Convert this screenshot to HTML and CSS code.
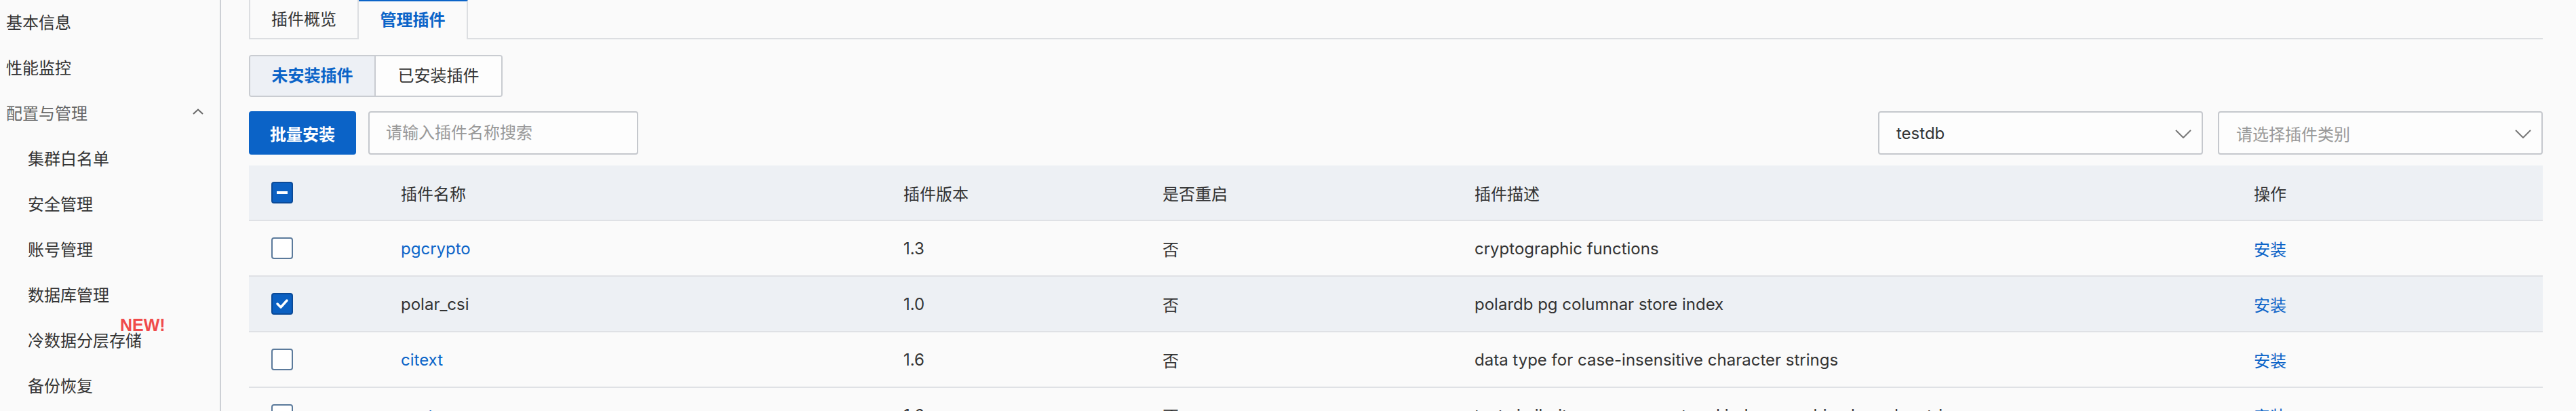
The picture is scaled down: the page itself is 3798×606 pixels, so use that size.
FILE: index.html
```html
<!DOCTYPE html>
<html lang="zh-CN">
<head>
<meta charset="utf-8">
<title>插件管理</title>
<link rel="stylesheet" href="styles.css">
</head>
<body>
<div class="app">
  <aside class="sidebar">
    <div class="nav-item">基本信息</div>
    <div class="nav-item">性能监控</div>
    <div class="nav-item nav-group">
      <span>配置与管理</span>
      <svg class="nav-chevron" width="16" height="9" viewBox="0 0 16 9"><polyline points="1,8 8,1.5 15,8" fill="none" stroke="#666" stroke-width="2"/></svg>
    </div>
    <div class="nav-item nav-sub">集群白名单</div>
    <div class="nav-item nav-sub">安全管理</div>
    <div class="nav-item nav-sub">账号管理</div>
    <div class="nav-item nav-sub">数据库管理</div>
    <div class="nav-item nav-sub nav-new">冷数据分层存储<span class="badge-new">NEW!</span></div>
    <div class="nav-item nav-sub">备份恢复</div>
  </aside>

  <main class="main">
    <div class="tabs">
      <div class="tab">插件概览</div>
      <div class="tab tab-active">管理插件</div>
      <div class="tab-fill"></div>
    </div>

    <div class="segmented">
      <div class="seg seg-active">未安装插件</div>
      <div class="seg">已安装插件</div>
    </div>

    <div class="toolbar">
      <button class="btn-primary">批量安装</button>
      <div class="search">请输入插件名称搜索</div>
      <div class="spacer"></div>
      <div class="select">
        <span class="select-value">testdb</span>
        <svg class="select-arrow" width="24" height="13" viewBox="0 0 24 13"><polyline points="1,1 12,12 23,1" fill="none" stroke="#777" stroke-width="2"/></svg>
      </div>
      <div class="select">
        <span class="select-placeholder">请选择插件类别</span>
        <svg class="select-arrow" width="24" height="13" viewBox="0 0 24 13"><polyline points="1,1 12,12 23,1" fill="none" stroke="#777" stroke-width="2"/></svg>
      </div>
    </div>

    <table class="grid">
      <colgroup>
        <col class="c-check"><col class="c-name"><col class="c-ver"><col class="c-restart"><col class="c-desc"><col class="c-op">
      </colgroup>
      <thead>
        <tr>
          <th><span class="cb cb-on"><span class="cb-dash"></span></span></th>
          <th>插件名称</th>
          <th>插件版本</th>
          <th>是否重启</th>
          <th>插件描述</th>
          <th>操作</th>
        </tr>
      </thead>
      <tbody>
        <tr>
          <td><span class="cb"></span></td>
          <td><a class="link">pgcrypto</a></td>
          <td>1.3</td>
          <td>否</td>
          <td>cryptographic functions</td>
          <td><a class="link">安装</a></td>
        </tr>
        <tr class="row-selected">
          <td><span class="cb cb-on"><svg width="20" height="16" viewBox="0 0 20 16"><polyline points="3,8 8,13 17,3" fill="none" stroke="#fff" stroke-width="3.5" stroke-linecap="round" stroke-linejoin="round"/></svg></span></td>
          <td>polar_csi</td>
          <td>1.0</td>
          <td>否</td>
          <td>polardb pg columnar store index</td>
          <td><a class="link">安装</a></td>
        </tr>
        <tr>
          <td><span class="cb"></span></td>
          <td><a class="link">citext</a></td>
          <td>1.6</td>
          <td>否</td>
          <td>data type for case-insensitive character strings</td>
          <td><a class="link">安装</a></td>
        </tr>
        <tr>
          <td><span class="cb"></span></td>
          <td><a class="link">pg_trgm</a></td>
          <td>1.6</td>
          <td>否</td>
          <td>text similarity measurement and index searching based on trigrams</td>
          <td><a class="link">安装</a></td>
        </tr>
      </tbody>
    </table>
  </main>
</div>
</body>
</html>
```

FILE: styles.css
```css
html, body {
  margin: 0;
  padding: 0;
  background: #fafafa;
}

body {
  font-family: "Inter", "Noto Sans CJK SC", sans-serif;
  font-size: 24px;
  color: #333;
  overflow: hidden;
}

.app {
  display: flex;
  height: 606px;
  overflow: hidden;
}

/* Sidebar */
.sidebar {
  width: 324px;
  flex: none;
  border-right: 2px solid #cdd0d5;
  display: flex;
  flex-direction: column;
}

.nav-item {
  height: 67px;
  line-height: 67px;
  padding-left: 9px;
  padding-right: 24px;
  color: #333;
  white-space: nowrap;
  position: relative;
}

.nav-group {
  color: #666;
  display: flex;
  align-items: center;
  justify-content: space-between;
}

.nav-chevron {
  display: block;
  margin-top: -6px;
}

.nav-sub {
  padding-left: 41px;
}

.badge-new {
  position: absolute;
  left: 177px;
  top: -3px;
  line-height: 26px;
  font-family: "Liberation Sans", Arial, sans-serif;
  font-weight: 700;
  font-size: 25px;
  color: #f04b4b;
}

/* Main */
.main {
  flex: 1;
  min-width: 0;
  padding: 0 49px 0 41px;
}

.tabs {
  display: flex;
  height: 58px;
}

.tab {
  width: 158px;
  box-sizing: content-box;
  border: 2px solid #dcdee1;
  border-top: none;
  text-align: center;
  line-height: 58px;
  height: 56px;
  color: #333;
}

.tab + .tab {
  border-left: none;
}

.tab-active {
  width: 159px;
  border-bottom: none;
  border-top: 2px solid #0b64c8;
  height: 56px;
  line-height: 56px;
  color: #0b64c8;
  font-weight: 700;
}

.tab-fill {
  flex: 1;
  border-bottom: 2px solid #dcdee1;
}

/* Segmented control */
.segmented {
  display: inline-flex;
  margin-top: 23px;
  border: 2px solid #c9ccd1;
  border-radius: 4px;
  overflow: hidden;
  height: 58px;
}

.seg {
  line-height: 58px;
  text-align: center;
  background: #fdfdfd;
  color: #333;
}

.seg-active {
  width: 183px;
  background: #edf0f5;
  color: #0b64c8;
  font-weight: 700;
  border-right: 2px solid #c9ccd1;
}

.seg:not(.seg-active) {
  width: 185px;
}

/* Toolbar */
.toolbar {
  display: flex;
  align-items: stretch;
  margin-top: 21px;
  height: 64px;
}

.btn-primary {
  width: 158px;
  border: none;
  border-radius: 4px;
  background: #0b63c7;
  color: #fff;
  font-family: inherit;
  font-size: 24px;
  font-weight: 700;
  padding: 0;
}

.search {
  margin-left: 18px;
  width: 398px;
  box-sizing: border-box;
  border: 2px solid #c5c8cd;
  border-radius: 4px;
  background: #fdfdfd;
  padding-left: 24px;
  line-height: 60px;
  color: #999;
}

.spacer {
  flex: 1;
}

.select {
  width: 479px;
  box-sizing: border-box;
  border: 2px solid #c5c8cd;
  border-radius: 4px;
  background: #fdfdfd;
  display: flex;
  align-items: center;
  justify-content: space-between;
  padding: 0 15px 0 25px;
}

.select + .select {
  margin-left: 22px;
}

.select-value {
  color: #333;
}

.select-placeholder {
  color: #999;
}

.select-arrow {
  display: block;
  margin-top: 2px;
}

/* Table */
.grid {
  margin-top: 16px;
  width: 100%;
  table-layout: fixed;
  border-collapse: collapse;
}

.c-check { width: 191px; }
.c-name { width: 741px; }
.c-ver { width: 382px; }
.c-restart { width: 460px; }
.c-desc { width: 1149px; }
.c-op { width: 459px; }

.grid th,
.grid td {
  height: 80px;
  padding: 0 0 0 33px;
  text-align: left;
  vertical-align: middle;
  border-bottom: 2px solid #dfe1e5;
  white-space: nowrap;
  overflow: hidden;
  font-weight: 400;
  color: #333;
}

.grid thead tr,
.row-selected {
  background: #edf0f4;
}

.link {
  color: #0b64c8;
  text-decoration: none;
  cursor: pointer;
}

.cb {
  display: block;
  width: 32px;
  height: 32px;
  box-sizing: border-box;
  border: 2px solid #5b7a9b;
  border-radius: 4px;
  background: #fff;
  position: relative;
}

.cb-on {
  background: #0b60c2;
  border-color: #0a4a98;
  display: flex;
  align-items: center;
  justify-content: center;
}

.cb-dash {
  display: block;
  width: 16px;
  height: 4px;
  background: #fff;
}
```
